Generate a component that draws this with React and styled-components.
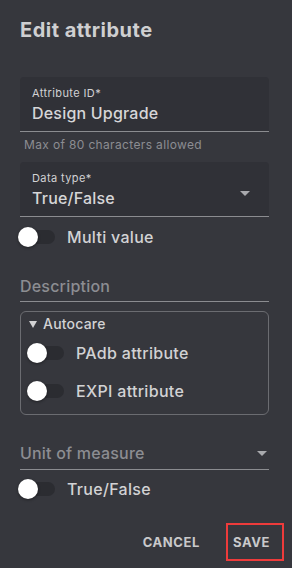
import React from "react";
import styled, { createGlobalStyle } from "styled-components";

const Global = createGlobalStyle`
  html, body {
    margin: 0;
    padding: 0;
    background: #36373d;
  }
  body {
    font-family: Inter, "Noto Sans", sans-serif;
    overflow: hidden;
  }
`;

const Panel = styled.div`
  width: 292px;
  height: 568px;
  box-sizing: border-box;
  padding: 18px 23px 0 20px;
  background: #36373d;
  display: flex;
  flex-direction: column;
`;

const Title = styled.h2`
  margin: 0;
  font-size: 20px;
  line-height: 24px;
  font-weight: 700;
  color: #cfcfd1;
  letter-spacing: 0.5px;
`;

const Filled = styled.div`
  margin-top: ${(p) => p.$top}px;
  height: 55px;
  box-sizing: border-box;
  background: #303137;
  border-radius: 4px 4px 0 0;
  border-bottom: 1px solid #8b8c90;
  padding: 9px 12px 0;
  display: flex;
  align-items: flex-start;
  justify-content: space-between;
`;

const FieldText = styled.div`
  display: flex;
  flex-direction: column;
  gap: 3px;
`;

const Label = styled.span`
  font-size: 11px;
  line-height: 14px;
  letter-spacing: 0.4px;
  color: #d2d2d4;
`;

const Value = styled.span`
  font-size: 16px;
  line-height: 20px;
  font-weight: 500;
  letter-spacing: 0.2px;
  color: #d6d6d8;
`;

const Helper = styled.div`
  margin-top: 6px;
  padding-left: 4px;
  font-size: 12px;
  line-height: 14px;
  letter-spacing: 0.35px;
  color: #8c8d92;
`;

const Arrow = styled.span`
  width: 0;
  height: 0;
  margin-top: ${(p) => p.$top}px;
  margin-right: ${(p) => p.$right}px;
  border-left: 5px solid transparent;
  border-right: 5px solid transparent;
  border-top: 5px solid #a9aaae;
`;

const SwitchRow = styled.div`
  margin-top: ${(p) => p.$top || 0}px;
  height: 20px;
  display: flex;
  align-items: center;
  gap: 12px;
  padding-left: ${(p) => (p.$inset ? 6 : 0)}px;
  margin-left: ${(p) => (p.$inset ? 0 : -2)}px;
`;

const Track = styled.span`
  position: relative;
  width: 37px;
  height: 14px;
  border-radius: 7px;
  background: #2b2c31;
  display: inline-block;
  flex-shrink: 0;
`;

const Thumb = styled.span`
  position: absolute;
  left: 0;
  top: -3px;
  width: 20px;
  height: 20px;
  border-radius: 50%;
  background: #ffffff;
  box-shadow: 0 1px 3px rgba(0, 0, 0, 0.4);
`;

const SwitchLabel = styled.span`
  font-size: 16px;
  line-height: 20px;
  font-weight: 500;
  letter-spacing: 0.3px;
  color: #d2d2d4;
`;

const Underlined = styled.div`
  margin-top: ${(p) => p.$top}px;
  padding-bottom: ${(p) => p.$pad}px;
  border-bottom: 1px solid #8b8c90;
  display: flex;
  justify-content: space-between;
  align-items: flex-start;
`;

const Placeholder = styled.span`
  font-size: 16px;
  line-height: 20px;
  font-weight: 500;
  letter-spacing: 0.2px;
  color: #8c8d92;
`;

const Group = styled.div`
  margin-top: 9px;
  height: 104px;
  box-sizing: border-box;
  border: 1px solid #6b6c71;
  border-radius: 6px;
  padding: 5px 0 0 0;
  display: flex;
  flex-direction: column;
`;

const GroupHead = styled.div`
  display: flex;
  align-items: center;
  gap: 6px;
  padding-left: 8px;
  font-size: 14px;
  line-height: 14px;
  font-weight: 500;
  letter-spacing: 0.2px;
  color: #d2d2d4;
`;

const Caret = styled.span`
  width: 0;
  height: 0;
  border-left: 4px solid transparent;
  border-right: 4px solid transparent;
  border-top: 7px solid #d2d2d4;
`;

const Actions = styled.div`
  margin-top: 24px;
  margin-right: -15px;
  display: flex;
  justify-content: flex-end;
  align-items: center;
  gap: 24px;
`;

const Button = styled.button`
  background: transparent;
  font-family: Inter, "Noto Sans", sans-serif;
  font-weight: 700;
  font-size: 13px;
  letter-spacing: 0.6px;
  color: #c9c9cb;
  cursor: pointer;
  height: 38px;
  box-sizing: border-box;
  border: 2px solid ${(p) => (p.$marked ? "#ee3b3b" : "transparent")};
  padding: ${(p) => (p.$marked ? "0 12px 0 5px" : "0")};
`;

function Switch({ label, top, inset }) {
  return (
    <SwitchRow $top={top} $inset={inset}>
      <Track>
        <Thumb />
      </Track>
      <SwitchLabel>{label}</SwitchLabel>
    </SwitchRow>
  );
}

export default function App() {
  return (
    <>
      <Global />
      <Panel>
        <Title>Edit attribute</Title>

        <Filled $top={35}>
          <FieldText>
            <Label>Attribute ID*</Label>
            <Value>Design Upgrade</Value>
          </FieldText>
        </Filled>
        <Helper>Max of 80 characters allowed</Helper>

        <Filled $top={10}>
          <FieldText>
            <Label>Data type*</Label>
            <Value>True/False</Value>
          </FieldText>
          <Arrow $top={20} $right={7} />
        </Filled>

        <Switch label="Multi value" top={10} />

        <Underlined $top={29} $pad={5}>
          <Placeholder>Description</Placeholder>
        </Underlined>

        <Group>
          <GroupHead>
            <Caret />
            Autocare
          </GroupHead>
          <Switch label="PAdb attribute" top={12} inset />
          <Switch label="EXPI attribute" top={18} inset />
        </Group>

        <Underlined $top={28} $pad={6}>
          <Placeholder>Unit of measure</Placeholder>
          <Arrow $top={8} $right={2} />
        </Underlined>

        <Switch label="True/False" top={9} />

        <Actions>
          <Button>CANCEL</Button>
          <Button $marked>SAVE</Button>
        </Actions>
      </Panel>
    </>
  );
}
